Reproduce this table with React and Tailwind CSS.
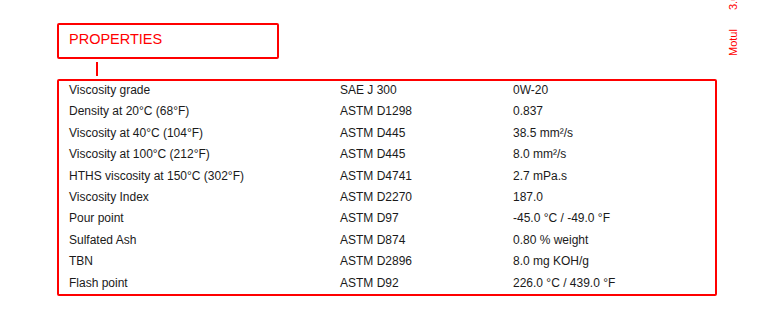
const ROWS = [
  ["Viscosity grade", "SAE J 300", "0W-20"],
  ["Density at 20°C (68°F)", "ASTM D1298", "0.837"],
  ["Viscosity at 40°C (104°F)", "ASTM D445", "38.5 mm²/s"],
  ["Viscosity at 100°C (212°F)", "ASTM D445", "8.0 mm²/s"],
  ["HTHS viscosity at 150°C (302°F)", "ASTM D4741", "2.7 mPa.s"],
  ["Viscosity Index", "ASTM D2270", "187.0"],
  ["Pour point", "ASTM D97", "-45.0 °C / -49.0 °F"],
  ["Sulfated Ash", "ASTM D874", "0.80 % weight"],
  ["TBN", "ASTM D2896", "8.0 mg KOH/g"],
  ["Flash point", "ASTM D92", "226.0 °C / 439.0 °F"],
];

function SectionTitle({ label }) {
  return (
    <div className="ml-[57px] mt-[23px] h-[36px] w-[222px] rounded-[2px] border-2 border-[#ff0000] pl-[10px] pt-[7px]">
      <span className="block text-[14.5px] leading-none text-[#ff0000]">{label}</span>
    </div>
  );
}

function PropertyRow({ name, method, value }) {
  return (
    <div className="grid h-[21.44px] grid-cols-[271px_173px_1fr] px-[10px] text-[12px] leading-[21.44px] text-[#1a1a1a]">
      <span>{name}</span>
      <span>{method}</span>
      <span>{value}</span>
    </div>
  );
}

export default function App() {
  return (
    <div className="relative h-[310px] w-[772px] overflow-hidden bg-white font-['Liberation_Sans',Arial,sans-serif]">
      <SectionTitle label="PROPERTIES" />
      <div className="ml-[96px] mt-[3px] h-[14px] w-[2px] bg-[#ff0000]" />
      <div className="ml-[57px] mt-[3px] h-[217px] w-[660px] rounded-[2px] border-2 border-[#ff0000]">
        <div className="-mt-[1.2px]">
          {ROWS.map(([name, method, value]) => (
            <PropertyRow key={name} name={name} method={method} value={value} />
          ))}
        </div>
      </div>
      <div className="absolute left-[728px] top-[-44.5px] flex h-[100px] rotate-180 gap-[19px] whitespace-nowrap text-[11px] leading-[11px] text-[#ff0000] [writing-mode:vertical-rl]">
        <span>Motul</span>
        <span>3.0</span>
      </div>
    </div>
  );
}
